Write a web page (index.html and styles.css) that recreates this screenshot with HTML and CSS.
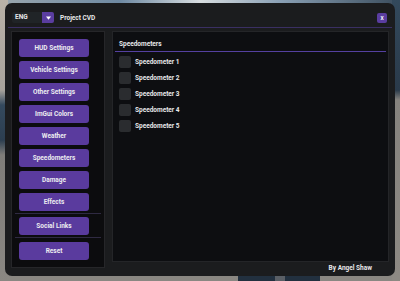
FILE: index.html
```html
<!DOCTYPE html>
<html>
<head>
<meta charset="utf-8">
<link rel="stylesheet" href="styles.css">
</head>
<body>
<div class="window">
  <div class="header">
    <div class="combo">
      <span class="combo-val">ENG</span>
      <span class="combo-arrow"><svg width="5" height="4" viewBox="0 0 5 4"><path d="M0 0.5H5L2.5 3.8Z" fill="#fff"/></svg></span>
    </div>
    <span class="title">Project CVD</span>
    <button class="close">X</button>
  </div>
  <div class="rule"></div>
  <div class="body">
    <nav class="sidebar">
      <button class="btn">HUD Settings</button>
      <button class="btn">Vehicle Settings</button>
      <button class="btn">Other Settings</button>
      <button class="btn">ImGui Colors</button>
      <button class="btn">Weather</button>
      <button class="btn">Speedometers</button>
      <button class="btn">Damage</button>
      <button class="btn">Effects</button>
      <div class="sep"></div>
      <button class="btn">Social Links</button>
      <div class="sep sep2"></div>
      <button class="btn">Reset</button>
    </nav>
    <div class="main-col">
      <section class="content">
        <div class="content-title">Speedometers</div>
        <div class="content-rule"></div>
        <ul class="checks">
          <li><span class="box"></span>Speedometer 1</li>
          <li><span class="box"></span>Speedometer 2</li>
          <li><span class="box"></span>Speedometer 3</li>
          <li><span class="box"></span>Speedometer 4</li>
          <li><span class="box"></span>Speedometer 5</li>
        </ul>
      </section>
      <div class="footer">By Angel Shaw</div>
    </div>
  </div>
</div>
</body>
</html>
```
FILE: styles.css
```css
* { box-sizing: border-box; }
html, body { margin: 0; padding: 0; }
body {
  width: 400px;
  height: 281px;
  overflow: hidden;
  font-family: Roboto, "Open Sans", sans-serif;
  font-weight: 700;
  color: #e8e8ea;
  background:
    linear-gradient(90deg, transparent 238px, #22303f 238px, #22303f 275px, #5a5f66 275px, #5a5f66 285px, #22303f 285px, #22303f 320px, transparent 320px) left bottom / 100% 8px no-repeat,
    linear-gradient(180deg, #b9b2a8 0, #a8a39c 90px, #34495d 105px, #2c3e50 140px, #7f7d79 155px, #8a8782 100%) left top / 8px 100% no-repeat,
    linear-gradient(180deg, #33495c 0, #2a3a4a 90px, #86837e 100px, #8d8983 100%) right top / 8px 100% no-repeat,
    linear-gradient(90deg, #9aa6ae, #6f8aa3 30%, #d8dde0 50%, #8aa0b5 70%, #3a4c5c) left top / 100% 8px no-repeat,
    #8a8782;
}
.window {
  margin: 3px 5px 0;
  height: 273px;
  border-radius: 7px;
  background: #1b1c1e;
  padding: 9px 6px 0;
  display: flex;
  flex-direction: column;
}
.header {
  display: flex;
  align-items: center;
  height: 11px;
  padding: 0 2px 0 1px;
}
.combo {
  display: flex;
  width: 42px;
  height: 11px;
  border-radius: 2px;
  overflow: hidden;
  background: #202427;
}
.combo-val {
  flex: 1;
  font-size: 6.5px;
  line-height: 11px;
  padding-left: 3px;
}
.combo-arrow {
  width: 12px;
  background: #5a3da0;
  display: flex;
  align-items: center;
  justify-content: center;
}
.title {
  font-size: 6.5px;
  margin-left: 6px;
  flex: 1;
}
.close {
  width: 10px;
  height: 10px;
  border: 0;
  padding: 0;
  border-radius: 2px;
  background: #5a3da0;
  color: #fff;
  font: 700 5px/10px Roboto, sans-serif;
}
.rule {
  height: 1px;
  background: #3a2f62;
  margin: 4px -3px 3px;
}
.body {
  flex: 1;
  display: flex;
  gap: 7px;
}
.sidebar {
  width: 94px;
  margin-bottom: 8px;
  border: 1px solid #262629;
  background: #0c0c0e;
  padding: 7px 0 0 7px;
  display: flex;
  flex-direction: column;
  gap: 4px;
}
.btn {
  width: 70px;
  height: 18px;
  border: 0;
  padding: 0;
  border-radius: 3px;
  background: #5a3b9e;
  color: #ececf0;
  font: 700 6.5px/18px Roboto, sans-serif;
  text-align: center;
}
.sep {
  height: 1px;
  background: #2f2a42;
  margin: -2px 3px -1px -4px;
}
.sep2 { margin-bottom: 0; }
.main-col {
  flex: 1;
  display: flex;
  flex-direction: column;
}
.content {
  flex: 1;
  border: 1px solid #242528;
  background: #0d0e11;
  padding: 0 2px;
}
.content-title {
  font-size: 6.5px;
  line-height: 9px;
  padding: 8px 0 0 4px;
  margin-bottom: 2px;
}
.content-rule {
  height: 1px;
  background: #5440a0;
}
.checks {
  list-style: none;
  margin: 4px 0 0;
  padding: 0 0 0 4px;
  display: flex;
  flex-direction: column;
  gap: 4px;
}
.checks li {
  display: flex;
  align-items: center;
  height: 12px;
  font-size: 6.5px;
}
.box {
  width: 12px;
  height: 12px;
  border-radius: 2px;
  background: #2a2c2f;
  margin-right: 4px;
}
.footer {
  height: 14px;
  line-height: 12px;
  font-size: 6.5px;
  text-align: right;
  padding-right: 17px;
}
```
